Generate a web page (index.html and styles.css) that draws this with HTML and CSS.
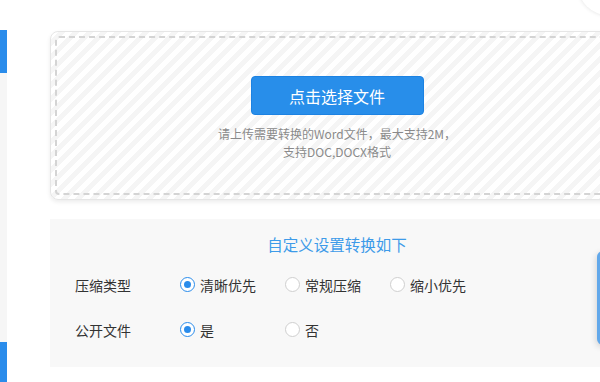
FILE: index.html
```html
<!DOCTYPE html>
<html lang="zh-CN">
<head>
  <meta charset="UTF-8">
  <title>Word压缩</title>
  <link rel="stylesheet" href="styles.css">
</head>
<body>
  <div id="page">
    <div id="side">
      <div class="side-gap"></div>
      <div class="side-blue"></div>
      <div class="side-gray"></div>
      <div class="side-blue side-last"></div>
    </div>

    <div id="main">
      <div id="upload-box">
        <div id="upload-inner">
          <button id="pick-button">点击选择文件</button>
          <p class="upload-tip">请上传需要转换的Word文件，最大支持2M，<br>支持DOC,DOCX格式</p>
        </div>
      </div>

      <div id="settings">
        <h2 class="settings-title">自定义设置转换如下</h2>
        <div class="settings-row">
          <div class="row-label">压缩类型</div>
          <label class="radio"><span class="dot checked"></span>清晰优先</label>
          <label class="radio"><span class="dot"></span>常规压缩</label>
          <label class="radio"><span class="dot"></span>缩小优先</label>
        </div>
        <div class="settings-row">
          <div class="row-label">公开文件</div>
          <label class="radio"><span class="dot checked"></span>是</label>
          <label class="radio"><span class="dot"></span>否</label>
        </div>
      </div>
    </div>
  </div>

  <!-- floating bits at the right edge -->
  <div id="corner-circle"></div>
  <div id="float-panel"></div>
</body>
</html>
```

FILE: styles.css
```css
body {
  margin: 0;
  background-color: #ffffff;
  font-family: "Noto Sans CJK SC", "Noto Sans", sans-serif;
  color: #333;
  overflow: hidden;
  height: 382px;
  position: relative;
}

#page {
  display: flex;
  height: 382px;
  overflow: hidden;
}

#side {
  width: 7px;
  display: flex;
  flex-direction: column;
  flex-shrink: 0;
}

.side-gap {
  height: 30px;
}

.side-blue {
  height: 43px;
  background-color: #2a8ceb;
}

.side-gray {
  height: 269px;
  background-color: #f6f6f6;
}

.side-last {
  flex: 1;
}

#main {
  margin-left: 43px;
  padding-top: 31px;
  width: 574px;
  flex-shrink: 0;
}

#upload-box {
  height: 169px;
  box-sizing: border-box;
  border: 1px solid #e6e6e6;
  border-radius: 8px;
  padding: 4px;
  box-shadow: 0 2px 4px rgba(0, 0, 0, 0.08);
  background: repeating-linear-gradient(135deg, #ffffff 0, #ffffff 5px, #f5f5f5 5px, #f5f5f5 10px);
}

#upload-inner {
  height: 100%;
  box-sizing: border-box;
  border: 2px dashed #d4d4d4;
  border-radius: 4px;
  display: flex;
  flex-direction: column;
  align-items: center;
  padding-top: 38px;
}

#pick-button {
  width: 173px;
  height: 39px;
  background-color: #288eea;
  border: 1px solid #1c82e2;
  border-radius: 4px;
  color: white;
  font-family: inherit;
  font-size: 16px;
  cursor: pointer;
}

.upload-tip {
  margin: 10px 0 0;
  font-size: 12px;
  line-height: 18px;
  color: #8a8a8a;
  text-align: center;
}

#settings {
  margin-top: 19px;
  height: 148px;
  box-sizing: border-box;
  background-color: #f8f8f8;
  padding: 13px 0 15px 25px;
}

.settings-title {
  margin: 0 0 6px;
  padding-right: 25px;
  font-size: 15.5px;
  font-weight: normal;
  line-height: 24px;
  color: #3d9be9;
  text-align: center;
}

.settings-row {
  display: grid;
  grid-template-columns: repeat(4, 105px);
  align-items: center;
  height: 45px;
  font-size: 14px;
}

.radio {
  display: flex;
  align-items: center;
  gap: 5px;
  color: #333;
}

.dot {
  width: 15px;
  height: 15px;
  box-sizing: border-box;
  border: 1px solid #cfcfcf;
  border-radius: 50%;
  background-color: #fff;
  display: flex;
  align-items: center;
  justify-content: center;
}

.dot.checked {
  border-color: #2a8ceb;
}

.dot.checked::after {
  content: "";
  width: 7px;
  height: 7px;
  border-radius: 50%;
  background-color: #2a8ceb;
}

#corner-circle {
  position: absolute;
  left: 578px;
  top: -45px;
  width: 60px;
  height: 60px;
  border-radius: 50%;
  background-color: #fff;
  box-shadow: 0 0 4px rgba(0, 0, 0, 0.12);
}

#float-panel {
  position: absolute;
  left: 597px;
  top: 251px;
  width: 40px;
  height: 94px;
  background-color: #fff;
  border-left: 3px solid #62a8ea;
  border-radius: 6px;
  box-shadow: -1px 2px 6px rgba(0, 0, 0, 0.15);
}
```
